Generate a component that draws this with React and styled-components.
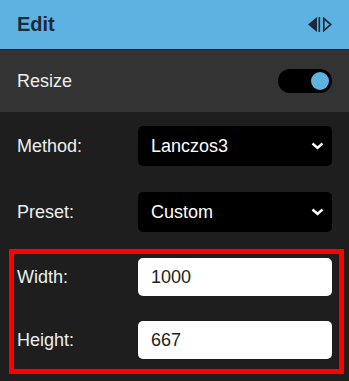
import styled, { createGlobalStyle } from 'styled-components';

const GlobalStyle = createGlobalStyle`
    html, body {
        margin: 0;
        padding: 0;
        background: #1e1e1e;
        font-family: "Liberation Sans", Arial, sans-serif;
    }
`;

const Panel = styled.div`
    width: 349px;
    height: 381px;
    background: #1e1e1e;
    display: flex;
    flex-direction: column;
    overflow: hidden;
`;

const Header = styled.header`
    height: 49px;
    border-bottom: 1px solid #1c1c1c;
    background: #5db2e2;
    display: flex;
    align-items: center;
    justify-content: space-between;
    padding: 0 17px;
`;

const Title = styled.h1`
    margin: 0;
    font-size: 20px;
    font-weight: bold;
    color: #1b2a38;
`;

const ToggleSection = styled.div`
    height: 62px;
    background: #333333;
    display: flex;
    align-items: center;
    justify-content: space-between;
    padding: 0 17px;
`;

const SectionLabel = styled.span`
    font-size: 18px;
    color: #eeeeee;
`;

const Switch = styled.button`
    width: 54px;
    height: 24px;
    border: none;
    border-radius: 12px;
    background: #000;
    padding: 0 3px;
    display: flex;
    align-items: center;
    justify-content: ${({ $on }) => ($on ? 'flex-end' : 'flex-start')};
    cursor: pointer;
`;

const Knob = styled.span`
    width: 18px;
    height: 18px;
    border-radius: 50%;
    background: #5db2e2;
`;

const Body = styled.div`
    padding: 14px 17px 0;
    display: flex;
    flex-direction: column;
    gap: 26px;
`;

const Row = styled.label`
    display: grid;
    grid-template-columns: 121px 194px;
    align-items: center;
`;

const Label = styled.span`
    font-size: 18px;
    color: #eeeeee;
`;

const SelectWrap = styled.div`
    position: relative;
    height: 40px;
`;

const Select = styled.select`
    appearance: none;
    width: 100%;
    height: 100%;
    border: none;
    border-radius: 5px;
    background: #000;
    color: #fff;
    font-family: inherit;
    font-size: 18px;
    padding: 0 30px 0 13px;
    outline: none;
`;

const Chevron = styled.svg`
    position: absolute;
    right: 8px;
    top: 16px;
    pointer-events: none;
`;

const Highlight = styled.div`
    margin: -9px -12px 0 -8px;
    border: 5px solid #ff0000;
    padding: 4px 7px 10px 3px;
    display: flex;
    flex-direction: column;
    gap: 25px;
`;

const NumberInput = styled.input`
    height: 38px;
    box-sizing: border-box;
    border: none;
    border-radius: 5px;
    background: #fff;
    color: #222;
    font-family: inherit;
    font-size: 18px;
    padding: 0 13px;
    outline: none;
`;

const CompareIcon = () => (
    <svg width="24" height="15" viewBox="0 0 24 15">
        <path d="M9 0 L0 7.5 L9 15 Z" fill="#1b2a38" />
        <rect x="10.5" y="0" width="1.6" height="15" fill="#1b2a38" />
        <path d="M15.8 1.4 L22.8 7.5 L15.8 13.6 Z" fill="none" stroke="#1b2a38" strokeWidth="1.7" strokeLinejoin="miter" />
    </svg>
);

const SelectField = ({ label, value, options }) => (
    <Row>
        <Label>{label}</Label>
        <SelectWrap>
            <Select defaultValue={value}>
                {options.map(o => <option key={o}>{o}</option>)}
            </Select>
            <Chevron width="13" height="8" viewBox="0 0 13 8">
                <path d="M1.5 1.5 L6.5 6 L11.5 1.5" fill="none" stroke="#fff" strokeWidth="2.4" />
            </Chevron>
        </SelectWrap>
    </Row>
);

const NumberField = ({ label, value }) => (
    <Row>
        <Label>{label}</Label>
        <NumberInput type="text" defaultValue={value} />
    </Row>
);

export default function App() {
    return (
        <Panel>
            <GlobalStyle />
            <Header>
                <Title>Edit</Title>
                <CompareIcon />
            </Header>
            <ToggleSection>
                <SectionLabel>Resize</SectionLabel>
                <Switch $on aria-label="Resize"><Knob /></Switch>
            </ToggleSection>
            <Body>
                <SelectField label="Method:" value="Lanczos3" options={['Lanczos3', 'Mitchell', 'Catmull-Rom', 'Triangle']} />
                <SelectField label="Preset:" value="Custom" options={['Custom', '25%', '50%', '100%']} />
                <Highlight>
                    <NumberField label="Width:" value="1000" />
                    <NumberField label="Height:" value="667" />
                </Highlight>
            </Body>
        </Panel>
    );
}
